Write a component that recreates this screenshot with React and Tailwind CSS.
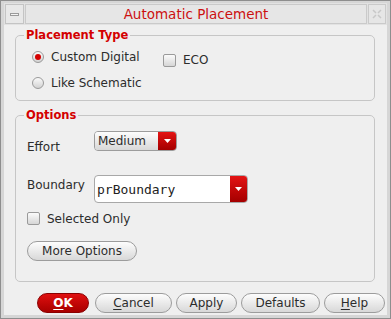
import React from 'react';

const font = { fontFamily: '"DejaVu Sans", "Liberation Sans", sans-serif' };

function Radio({ checked }) {
  return (
    <span className="w-[12px] h-[12px] rounded-full border border-[#9a9a9a] bg-gradient-to-b from-[#fafafa] to-[#d2d2d2] flex items-center justify-center shrink-0">
      {checked && <span className="w-[6px] h-[6px] rounded-full bg-[#d40000]" />}
    </span>
  );
}

function Check() {
  return (
    <span className="w-[13px] h-[13px] rounded-[2px] border border-[#9a9a9a] bg-gradient-to-b from-[#fbfbfb] to-[#d6d6d6] shrink-0" />
  );
}

function Arrow() {
  return (
    <svg width="7" height="4" viewBox="0 0 7 4">
      <path d="M0 0 L7 0 L3.5 4 Z" fill="#ffffff" />
    </svg>
  );
}

function Button({ children, className = '', red }) {
  return (
    <button
      className={
        'h-[20px] rounded-full border text-[12px] flex items-center justify-center ' +
        (red
          ? 'border-[#8a0000] bg-gradient-to-b from-[#e01010] to-[#a80000] text-white font-bold '
          : 'border-[#9c9c9c] bg-gradient-to-b from-[#fdfdfd] to-[#d8d8d8] text-[#2c2c2c] ') +
        className
      }
    >
      {children}
    </button>
  );
}

export default function App() {
  return (
    <div
      className="w-[391px] h-[319px] bg-[#d6d6d6] border border-[#8e8e8e] pt-[2px] px-[3px] pb-[3px] flex flex-col text-[#2c2c2c]"
      style={font}
    >
      {/* title bar */}
      <div className="h-[22px] flex items-stretch gap-[1px] bg-[#e2e2e2]">
        <div className="w-[19px] ml-[1px] my-[1px] border border-[#c4c4c4] bg-[#e8e8e8] flex items-center justify-center">
          <span className="w-[9px] h-[3px] border border-[#9a9a9a] bg-[#f4f4f4]" />
        </div>
        <div className="flex-1 my-[1px] border border-[#cacaca] bg-[#e6e6e6] flex items-center justify-center text-[13.5px] text-[#cc1010]">
          Automatic Placement
        </div>
        <div className="w-[18px] my-[1px] mr-[1px] border border-[#cacaca] bg-[#e6e6e6] flex items-center justify-center">
          <svg width="10" height="10" viewBox="0 0 10 10">
            <path d="M1 1 L4 4 M9 1 L6 4 M1 9 L4 6 M9 9 L6 6" stroke="#c8c8c8" strokeWidth="1.5" fill="none" />
          </svg>
        </div>
      </div>

      {/* body */}
      <div className="flex-1 bg-[#efefef] flex flex-col">
        <fieldset className="mt-[3px] ml-[11px] mr-[12px] border border-[#c6c6c6] rounded-[5px] px-[16px] pt-[5px] pb-[7px]">
          <legend className="-ml-[8px] px-[2px] text-[11.5px] leading-[14px] font-bold text-[#d40000]">
            Placement Type
          </legend>
          <div className="flex">
            <div className="flex flex-col gap-[6px] w-[131px]">
              <label className="h-[20px] flex items-center gap-[7px] text-[12px]">
                <Radio checked />
                Custom Digital
              </label>
              <label className="h-[20px] flex items-center gap-[7px] text-[12px]">
                <Radio />
                Like Schematic
              </label>
            </div>
            <label className="h-[20px] mt-[3px] flex items-center gap-[7px] text-[12px]">
              <Check />
              ECO
            </label>
          </div>
        </fieldset>

        <fieldset className="mt-[7px] ml-[11px] mr-[12px] h-[174px] border border-[#c6c6c6] rounded-[5px] pl-[11px] pt-[9px]">
          <legend className="-ml-[3px] px-[2px] text-[11.5px] leading-[14px] font-bold text-[#d40000]">
            Options
          </legend>
          <div className="flex items-start">
            <span className="w-[67px] mt-[9px] text-[12px] leading-[14px]">Effort</span>
            <div className="w-[83px] h-[20px] flex rounded-[4px] border border-[#9c9c9c] overflow-hidden">
              <div className="flex-1 bg-gradient-to-b from-[#fdfdfd] to-[#d8d8d8] text-[12px] leading-[18px] pl-[3px]">
                Medium
              </div>
              <div className="w-[18px] bg-gradient-to-b from-[#e41414] to-[#a40000] flex items-center justify-center">
                <Arrow />
              </div>
            </div>
          </div>
          <div className="flex items-center mt-[21px]">
            <span className="w-[67px] text-[12px] leading-[14px] -mt-[8px]">Boundary</span>
            <div className="w-[154px] h-[28px] flex rounded-[4px] border border-[#a8a8a8] overflow-hidden bg-white">
              <div
                className="flex-1 text-[13px] leading-[26px] pl-[2px] pt-[1px] text-[#222]"
                style={{ fontFamily: '"DejaVu Sans Mono", "Liberation Mono", monospace' }}
              >
                prBoundary
              </div>
              <div className="w-[17px] bg-gradient-to-b from-[#e41414] to-[#a40000] flex items-center justify-center">
                <Arrow />
              </div>
            </div>
          </div>
          <label className="mt-[9px] h-[13px] flex items-center gap-[7px] text-[12px]">
            <Check />
            Selected Only
          </label>
          <Button className="mt-[16px] w-[110px]">More Options</Button>
        </fieldset>

        <div className="mt-[11px] flex pl-[33px] gap-[4px]">
          <Button red className="w-[52px]">
            <span className="underline underline-offset-2">O</span>K
          </Button>
          <Button className="w-[77px] ml-[2px]">
            <span className="underline underline-offset-2">C</span>ancel
          </Button>
          <Button className="w-[61px]">Apply</Button>
          <Button className="w-[79px]">Defaults</Button>
          <Button className="w-[61px]">
            <span className="underline underline-offset-2">H</span>elp
          </Button>
        </div>
      </div>
    </div>
  );
}
